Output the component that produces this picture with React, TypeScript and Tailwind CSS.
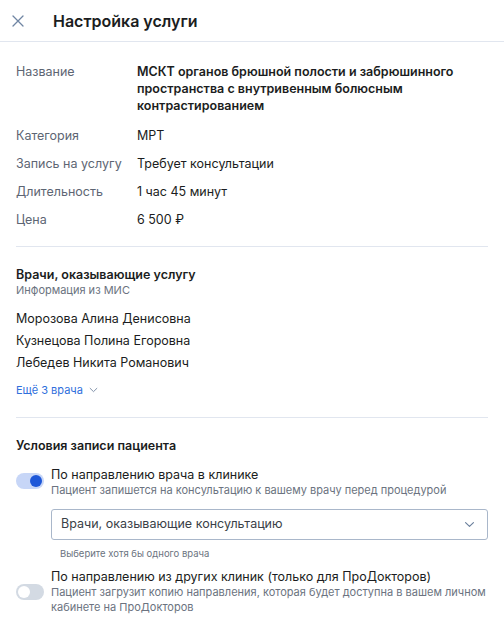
import React from "react";

function Chevron({ className }: { className?: string }) {
  return (
    <svg viewBox="0 0 12 8" className={className} fill="none" stroke="currentColor" strokeWidth="1.3" strokeLinecap="round" strokeLinejoin="round">
      <path d="M1.5 1.8 6 6.2l4.5-4.4" />
    </svg>
  );
}

function Toggle({ on }: { on: boolean }) {
  return (
    <div className={`relative h-[16px] w-[28px] shrink-0 rounded-full ${on ? "bg-[#c7d6f7]" : "bg-[#d3dae3]"}`}>
      <div className={`absolute top-[2px] h-[12px] w-[12px] rounded-full ${on ? "left-[14px] bg-[#1d57d8]" : "left-[2px] bg-white"}`} />
    </div>
  );
}

export default function App() {
  const rows: [string, string][] = [
    ["Категория", "МРТ"],
    ["Запись на услугу", "Требует консультации"],
    ["Длительность", "1 час 45 минут"],
    ["Цена", "6 500 ₽"],
  ];
  return (
    <div className="min-h-[637px] w-[504px] bg-white text-[#1b1d21]" style={{ fontFamily: "Inter, 'Noto Sans', sans-serif" }}>
      <div className="flex h-[42px] items-center border-b border-[#e1e6ef]">
        <div className="flex w-[53px] items-center pl-[12px]">
          <svg viewBox="0 0 12 12" className="h-[12px] w-[12px] text-[#6f85a3]" fill="none" stroke="currentColor" strokeWidth="1.3" strokeLinecap="round">
            <path d="M1 1l10 10M11 1 1 11" />
          </svg>
        </div>
        <div className="text-[16px] font-semibold leading-none">Настройка услуги</div>
      </div>

      <div className="px-[16px]">
        <div className="border-b border-[#e1e6ef] pb-[18px] pt-[21px]">
          <div className="flex">
            <div className="w-[121px] shrink-0 text-[12.5px] leading-[17px] text-[#5d6573]">Название</div>
            <div className="flex-1 pr-[4px] text-[12.5px] font-semibold leading-[17px]">
              МСКТ органов брюшной полости и забрюшинного пространства с внутривенным болюсным контрастированием
            </div>
          </div>
          <div className="mt-[13px] flex flex-col gap-[11px]">
            {rows.map(([l, v]) => (
              <div key={l} className="flex text-[12.5px] leading-[17px]">
                <div className="w-[121px] shrink-0 text-[#5d6573]">{l}</div>
                <div>{v}</div>
              </div>
            ))}
          </div>
        </div>

        <div className="border-b border-[#e1e6ef] pb-[19px] pt-[19px]">
          <div className="text-[12.5px] font-semibold leading-[17px]">Врачи, оказывающие услугу</div>
          <div className="text-[11px] leading-[14px] text-[#6b7380]">Информация из МИС</div>
          <div className="mt-[13px] flex flex-col gap-[5px]">
            {["Морозова Алина Денисовна", "Кузнецова Полина Егоровна", "Лебедев Никита Романович"].map((n) => (
              <div key={n} className="text-[12.5px] leading-[17px]">{n}</div>
            ))}
          </div>
          <div className="mt-[11px] flex items-center gap-[6px] text-[11px] leading-[16px] text-[#2f6fdc]">
            <span>Ещё 3 врача</span>
            <Chevron className="h-[6px] w-[9px] text-[#7d8fa8]" />
          </div>
        </div>

        <div className="pt-[19px]">
          <div className="text-[12.5px] font-semibold leading-[17px]">Условия записи пациента</div>
          <div className="mt-[12px] flex gap-[7px]">
            <div className="pt-[7px]"><Toggle on /></div>
            <div className="flex-1">
              <div className="text-[12.5px] leading-[17px]">По направлению врача в клинике</div>
              <div className="text-[11px] leading-[14px] text-[#6b7380]">Пациент запишется на консультацию к вашему врачу перед процедурой</div>
              <div className="mt-[12px] flex h-[31px] items-center justify-between rounded-[3px] border border-[#a9b7ca] pl-[9px] pr-[12px]">
                <span className="text-[12.5px] text-[#3a3f47]">Врачи, оказывающие консультацию</span>
                <Chevron className="h-[7px] w-[11px] text-[#6a7f9c]" />
              </div>
              <div className="mt-[8px] pl-[9px] text-[9.5px] leading-[12px] text-[#6b7380]">Выберите хотя бы одного врача</div>
            </div>
          </div>
          <div className="mt-[8px] flex items-center gap-[7px]">
            <Toggle on={false} />
            <div className="flex-1">
              <div className="text-[12.5px] leading-[17px]">По направлению из других клиник (только для ПроДокторов)</div>
              <div className="text-[11px] leading-[15px] text-[#6b7380]">
                Пациент загрузит копию направления, которая будет доступна в вашем личном кабинете на ПроДокторов
              </div>
            </div>
          </div>
        </div>
      </div>
    </div>
  );
}
